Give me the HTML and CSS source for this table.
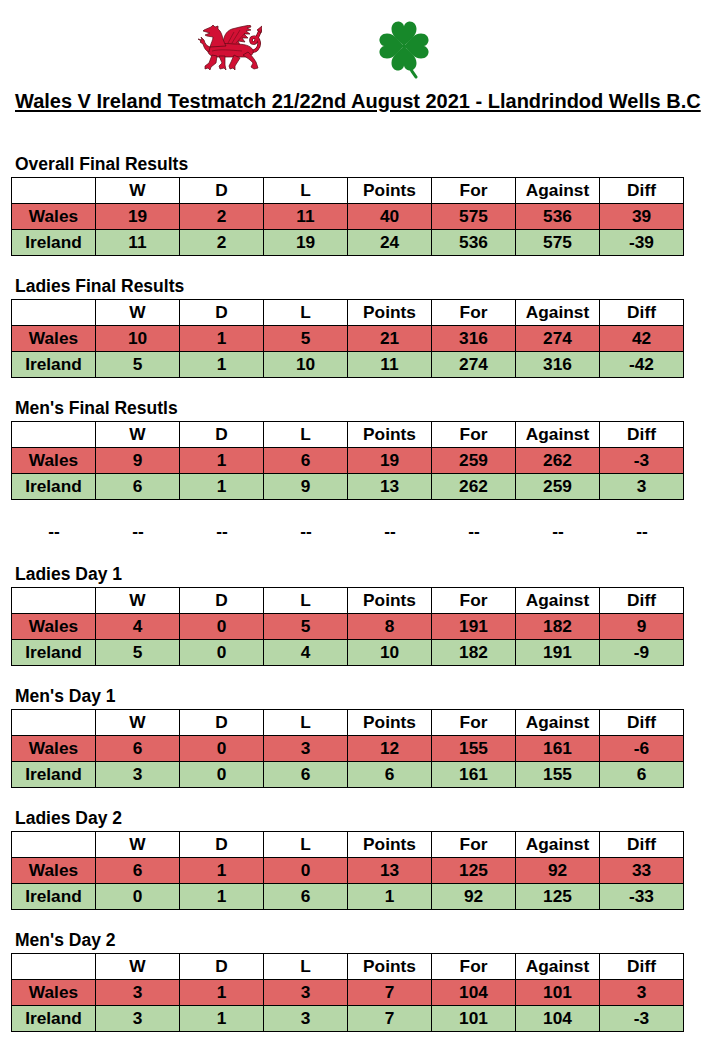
FILE: index.html
```html
<!DOCTYPE html>
<html lang="en">
<head>
<meta charset="utf-8">
<title>Wales V Ireland Testmatch</title>
<link rel="stylesheet" href="styles.css">
</head>
<body>
<div class="page">
  <div class="logos">
    <svg class="dragon" viewBox="0 0 64 46" width="64" height="46" aria-label="Welsh dragon">
      <path d="M50,27 C58,27 62,23 61,17 C60,11 53,11 53,15 C53,19 58,19 58,15 L62,6" fill="none" stroke="#5a0a14" stroke-width="3.6" stroke-linecap="round"/>
      <path d="M50,27 C58,27 62,23 61,17 C60,11 53,11 53,15 C53,19 58,19 58,15 L62,6" fill="none" stroke="#d21034" stroke-width="2.4" stroke-linecap="round"/>
      <g fill="#d21034" stroke="#5a0a14" stroke-width="0.7" stroke-linejoin="round">
        <path d="M59,5 L64,1 L63,8 Z"/>
        <path d="M25,20 C25,12 28,6 34,4 L42,2 L52,0 L53,2 L49,3 L53,5 L48,6 L52,9 L46,9 L50,13 L44,13 L47,17 L40,16 L42,20 Z"/>
        <path d="M10,24 C14,18 26,18 36,19 C46,19 52,20 55,25 C56,29 53,32 47,32 L17,32 C12,31 9,28 10,24 Z"/>
        <path d="M6,5 L13,2 L15,0 L17,2 L20,1 L20,4 C23,6 24,10 25,14 C26,17 27,19 28,21 L12,22 C13,18 15,15 15,12 L9,11 L7,10 L12,8 L5,6 Z"/>
        <path d="M11,27 C8,26 6,23 5,19 L2,17 L3,16 L0,14 L4,15 L3,12 L6,15 C7,19 9,21 12,22 Z"/>
        <path d="M14,30 L11,38 L7,41 L7,44 L10,43 L12,45 L13,42 L18,38 L19,31 Z"/>
        <path d="M21,31 L24,38 L21,41 L22,44 L26,43 L28,45 L27,40 L27,31 Z"/>
        <path d="M36,30 L33,37 L31,41 L32,44 L35,43 L37,45 L37,41 L42,33 Z"/>
        <path d="M45,30 C49,33 53,35 55,38 L53,42 L56,44 L60,43 L59,40 L58,37 C55,32 52,29 50,27 Z"/>
      </g>
      <g fill="none" stroke="#5a0a14" stroke-width="0.5">
        <path d="M30,18 L36,7 M34,18 L42,5 M38,18 L47,8"/>
        <path d="M14,26 C22,24 32,25 44,26"/>
      </g>
    </svg>
    <svg class="clover" viewBox="0 0 50 58" width="50" height="58" aria-label="Shamrock">
      <path d="M25,25 C27,38 30,48 37,56" fill="none" stroke="#17882a" stroke-width="3" stroke-linecap="round"/>
      <g fill="#17882a" transform="translate(25,25)">
        <path id="leaf" d="M0,0 C-6,-6 -12.5,-10 -12.5,-17 C-12.5,-22 -9,-25 -5,-24.5 C-2,-24 0,-21.5 0,-19.5 C0,-21.5 2,-24 5,-24.5 C9,-25 12.5,-22 12.5,-17 C12.5,-10 6,-6 0,0 Z"/>
        <use href="#leaf" transform="rotate(90)"/>
        <use href="#leaf" transform="rotate(180)"/>
        <use href="#leaf" transform="rotate(270)"/>
      </g>
    </svg>
  </div>

  <h1 class="title">Wales V Ireland Testmatch 21/22nd August 2021 - Llandrindod Wells B.C</h1>

  <section class="block">
    <h2 class="heading">Overall Final Results</h2>
    <table class="results">
      <tr class="head"><td></td><td>W</td><td>D</td><td>L</td><td>Points</td><td>For</td><td>Against</td><td>Diff</td></tr>
      <tr class="wales"><td>Wales</td><td>19</td><td>2</td><td>11</td><td>40</td><td>575</td><td>536</td><td>39</td></tr>
      <tr class="ireland"><td>Ireland</td><td>11</td><td>2</td><td>19</td><td>24</td><td>536</td><td>575</td><td>-39</td></tr>
    </table>
  </section>

  <section class="block">
    <h2 class="heading">Ladies Final Results</h2>
    <table class="results">
      <tr class="head"><td></td><td>W</td><td>D</td><td>L</td><td>Points</td><td>For</td><td>Against</td><td>Diff</td></tr>
      <tr class="wales"><td>Wales</td><td>10</td><td>1</td><td>5</td><td>21</td><td>316</td><td>274</td><td>42</td></tr>
      <tr class="ireland"><td>Ireland</td><td>5</td><td>1</td><td>10</td><td>11</td><td>274</td><td>316</td><td>-42</td></tr>
    </table>
  </section>

  <section class="block">
    <h2 class="heading">Men's Final Resutls</h2>
    <table class="results">
      <tr class="head"><td></td><td>W</td><td>D</td><td>L</td><td>Points</td><td>For</td><td>Against</td><td>Diff</td></tr>
      <tr class="wales"><td>Wales</td><td>9</td><td>1</td><td>6</td><td>19</td><td>259</td><td>262</td><td>-3</td></tr>
      <tr class="ireland"><td>Ireland</td><td>6</td><td>1</td><td>9</td><td>13</td><td>262</td><td>259</td><td>3</td></tr>
    </table>
  </section>

  <div class="dashes">
    <span>--</span><span>--</span><span>--</span><span>--</span><span>--</span><span>--</span><span>--</span><span>--</span>
  </div>

  <section class="block">
    <h2 class="heading">Ladies Day 1</h2>
    <table class="results">
      <tr class="head"><td></td><td>W</td><td>D</td><td>L</td><td>Points</td><td>For</td><td>Against</td><td>Diff</td></tr>
      <tr class="wales"><td>Wales</td><td>4</td><td>0</td><td>5</td><td>8</td><td>191</td><td>182</td><td>9</td></tr>
      <tr class="ireland"><td>Ireland</td><td>5</td><td>0</td><td>4</td><td>10</td><td>182</td><td>191</td><td>-9</td></tr>
    </table>
  </section>

  <section class="block">
    <h2 class="heading">Men's Day 1</h2>
    <table class="results">
      <tr class="head"><td></td><td>W</td><td>D</td><td>L</td><td>Points</td><td>For</td><td>Against</td><td>Diff</td></tr>
      <tr class="wales"><td>Wales</td><td>6</td><td>0</td><td>3</td><td>12</td><td>155</td><td>161</td><td>-6</td></tr>
      <tr class="ireland"><td>Ireland</td><td>3</td><td>0</td><td>6</td><td>6</td><td>161</td><td>155</td><td>6</td></tr>
    </table>
  </section>

  <section class="block">
    <h2 class="heading">Ladies Day 2</h2>
    <table class="results">
      <tr class="head"><td></td><td>W</td><td>D</td><td>L</td><td>Points</td><td>For</td><td>Against</td><td>Diff</td></tr>
      <tr class="wales"><td>Wales</td><td>6</td><td>1</td><td>0</td><td>13</td><td>125</td><td>92</td><td>33</td></tr>
      <tr class="ireland"><td>Ireland</td><td>0</td><td>1</td><td>6</td><td>1</td><td>92</td><td>125</td><td>-33</td></tr>
    </table>
  </section>

  <section class="block">
    <h2 class="heading">Men's Day 2</h2>
    <table class="results">
      <tr class="head"><td></td><td>W</td><td>D</td><td>L</td><td>Points</td><td>For</td><td>Against</td><td>Diff</td></tr>
      <tr class="wales"><td>Wales</td><td>3</td><td>1</td><td>3</td><td>7</td><td>104</td><td>101</td><td>3</td></tr>
      <tr class="ireland"><td>Ireland</td><td>3</td><td>1</td><td>3</td><td>7</td><td>101</td><td>104</td><td>-3</td></tr>
    </table>
  </section>
</div>
</body>
</html>
```
FILE: styles.css
```css
html, body {
  margin: 0;
  padding: 0;
  background: #ffffff;
}

body {
  font-family: "Liberation Sans", Arial, sans-serif;
  color: #000000;
}

.page {
  width: 718px;
}

.logos {
  height: 89px;
  box-sizing: border-box;
  display: flex;
  align-items: flex-start;
  padding-top: 21px;
  padding-left: 198px;
  gap: 117px;
}

.logos svg {
  display: block;
}

.dragon {
  margin-top: 4px;
}

.title {
  margin: 0 0 21px 15px;
  font-size: 20px;
  line-height: 24px;
  font-weight: bold;
  text-decoration: underline;
  text-decoration-thickness: 1.5px;
  text-underline-offset: 2px;
  white-space: nowrap;
}

.block {
  margin: 0;
}

.heading {
  margin: 0;
  height: 43px;
  box-sizing: border-box;
  padding: 20px 0 0 15px;
  font-size: 17.5px;
  line-height: 20px;
  font-weight: bold;
}

.results {
  margin-left: 11px;
  border-collapse: collapse;
  table-layout: fixed;
  width: 673px;
}

.results td {
  border: 1px solid #000000;
  height: 25px;
  padding: 0;
  text-align: center;
  font-size: 17.3px;
  line-height: 25px;
  font-weight: bold;
  white-space: nowrap;
}

.results .head td {
  background: #ffffff;
}

.results .wales td {
  background: #e06666;
}

.results .ireland td {
  background: #b6d7a8;
}

.dashes {
  height: 44px;
  box-sizing: border-box;
  padding-top: 21px;
  margin-left: 12px;
  display: grid;
  grid-template-columns: repeat(8, 84px);
  font-size: 17.3px;
  line-height: 20px;
  font-weight: bold;
}

.dashes span {
  text-align: center;
}
```
